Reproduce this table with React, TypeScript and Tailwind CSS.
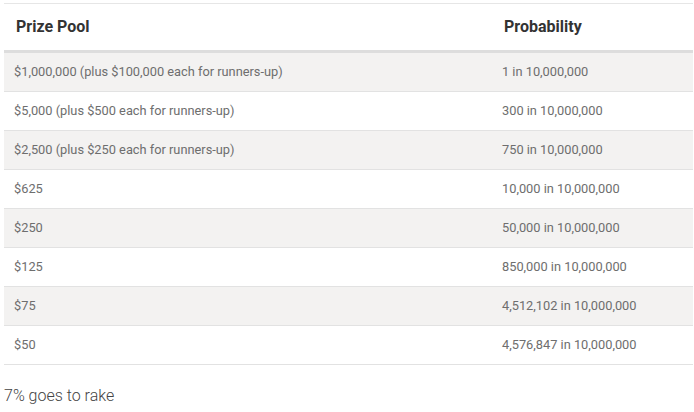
import React from "react";

const rows: [string, string][] = [
  ["$1,000,000 (plus $100,000 each for runners-up)", "1 in 10,000,000"],
  ["$5,000 (plus $500 each for runners-up)", "300 in 10,000,000"],
  ["$2,500 (plus $250 each for runners-up)", "750 in 10,000,000"],
  ["$625", "10,000 in 10,000,000"],
  ["$250", "50,000 in 10,000,000"],
  ["$125", "850,000 in 10,000,000"],
  ["$75", "4,512,102 in 10,000,000"],
  ["$50", "4,576,847 in 10,000,000"],
];

export default function App() {
  return (
    <div
      className="bg-white w-[694px] h-[412px] pt-[3px] pl-[4px] pr-[1px]"
      style={{ fontFamily: "Roboto, 'Liberation Sans', sans-serif" }}
    >
      <div className="border-t border-[#e6e6e6]">
        <div className="grid grid-cols-[488px_1fr] h-[49px] items-center border-b-[3px] border-[#dddddd] text-[16px] font-bold text-[#333333]">
          <div className="pl-[12px]">Prize Pool</div>
          <div className="pl-[12px]">Probability</div>
        </div>
        {rows.map(([a, b], i) => (
          <div
            key={i}
            className={
              "grid grid-cols-[488px_1fr] h-[39px] items-center border-b border-[#e2e2e2] text-[12.8px] text-[#6e6e6e] " +
              (i % 2 === 0 ? "bg-[#f3f2f1]" : "bg-white")
            }
          >
            <div className="pl-[10px]">{a}</div>
            <div className="pl-[10px]">{b}</div>
          </div>
        ))}
      </div>
      <div className="mt-[19px] text-[16px] font-light text-[#444444]">7% goes to rake</div>
    </div>
  );
}
